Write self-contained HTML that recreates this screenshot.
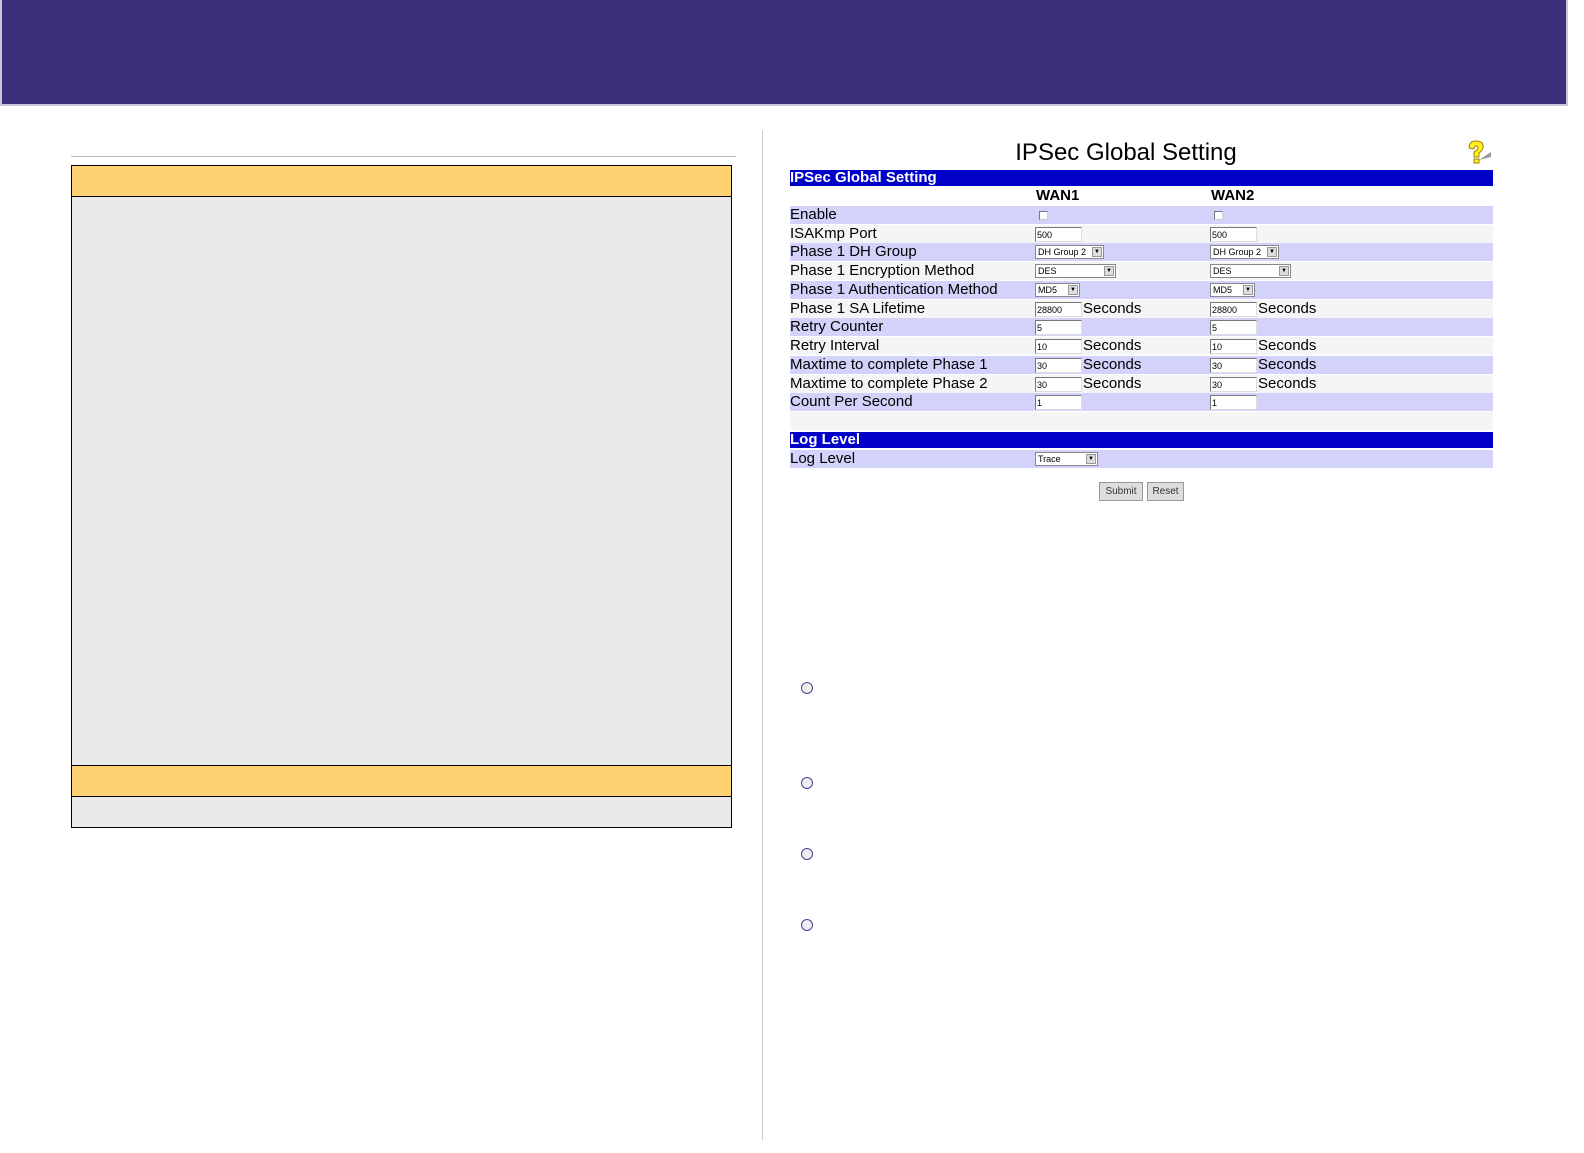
<!DOCTYPE html>
<html><head><meta charset="utf-8"><style>
body{margin:0;width:1584px;height:1153px;background:#fff;position:relative;font-family:"Liberation Sans",sans-serif;overflow:hidden}
.abs{position:absolute}
.row{position:absolute;left:790px;width:703px;height:18px;font-size:15px;line-height:18px;color:#000}
.p{background:#d2d2fa}.g{background:#f5f5f5}
.row span{position:absolute;top:0}
.inp{position:absolute;top:2px;height:15px;border:1px solid #777;border-right-color:#ddd;border-bottom-color:#ddd;background:#fff;font-size:9px;line-height:14px;padding-left:1px;box-sizing:border-box}
.sel{position:absolute;top:2px;height:14px;border:1px solid #888;background:#fff;font-size:9px;line-height:12px;padding-left:2px;box-sizing:border-box}
.sel i{position:absolute;right:1px;top:1px;width:10px;height:10px;background:#ddd;border:1px solid #999;box-sizing:border-box;font-style:normal;font-size:6px;line-height:8px;text-align:center}
.cb{position:absolute;top:5px;width:7px;height:7px;border:1px solid #777;border-right-color:#ccc;border-bottom-color:#ccc;background:#fff}
.bar{position:absolute;left:790px;width:703px;height:16px;background:#0000c8;color:#fff;font-weight:bold;font-size:15px;line-height:16px}
.circ{position:absolute;left:801px;width:10px;height:10px;border:1.5px solid #4a3f9a;border-radius:50%;background:#eee}
.btn{position:absolute;top:482px;height:17px;background:#ddd;border:1px solid #999;font-size:10px;line-height:17px;text-align:center;color:#333}
</style></head><body>
<div class="abs" style="left:0;top:0;width:1568px;height:106px;background:#3b2f7a;border:2px solid #c8c8d8;border-top:none;box-sizing:border-box"></div>
<div class="abs" style="left:71px;top:156px;width:665px;height:1px;background:#bbb"></div>
<div class="abs" style="left:71px;top:165px;width:661px;height:663px;border:1px solid #000;box-sizing:border-box;background:#e9e9e9"></div>
<div class="abs" style="left:72px;top:166px;width:659px;height:30px;background:#fed272;border-bottom:1px solid #000"></div>
<div class="abs" style="left:72px;top:765px;width:659px;height:30px;background:#fed272;border-top:1px solid #000;border-bottom:1px solid #000"></div>
<div class="abs" style="left:762px;top:130px;width:1px;height:1010px;background:#ccc"></div>
<div class="abs" style="left:790px;top:138px;width:672px;text-align:center;font-size:24px;line-height:30px">IPSec Global Setting</div>
<svg class="abs" style="left:1465px;top:140px" width="28" height="26" viewBox="0 0 28 26"><path d="M14 20 L26 12 L26 17 Z" fill="#999"/><path d="M4 8 Q4 1 11 1 Q19 1 18 8 Q17 11 14 13 L14 17 L9 17 L9 12 Q13 10 13 8 Q13 6 11 6 Q9 6 9 9 Z" fill="#ffef20" stroke="#a08000" stroke-width="1"/><rect x="9" y="19" width="5" height="4" fill="#ffef20" stroke="#a08000"/></svg>
<div class="bar" style="top:170px">IPSec Global Setting</div>
<div class="row" style="top:187px;background:#fff;font-weight:bold"><span style="left:246px">WAN1</span><span style="left:421px">WAN2</span></div>
<div class="row p" style="top:206px"><span>Enable</span><div class="cb" style="left:249px"></div><div class="cb" style="left:424px"></div></div>
<div class="row g" style="top:225px"><span>ISAKmp Port</span><div class="inp" style="left:245px;width:47px">500</div><div class="inp" style="left:420px;width:47px">500</div></div>
<div class="row p" style="top:243px"><span>Phase 1 DH Group</span><div class="sel" style="left:245px;width:69px">DH Group 2<i>▼</i></div><div class="sel" style="left:420px;width:69px">DH Group 2<i>▼</i></div></div>
<div class="row g" style="top:262px"><span>Phase 1 Encryption Method</span><div class="sel" style="left:245px;width:81px">DES<i>▼</i></div><div class="sel" style="left:420px;width:81px">DES<i>▼</i></div></div>
<div class="row p" style="top:281px"><span>Phase 1 Authentication Method</span><div class="sel" style="left:245px;width:45px">MD5<i>▼</i></div><div class="sel" style="left:420px;width:45px">MD5<i>▼</i></div></div>
<div class="row g" style="top:300px"><span>Phase 1 SA Lifetime</span><div class="inp" style="left:245px;width:47px">28800</div><span style="left:293px">Seconds</span><div class="inp" style="left:420px;width:47px">28800</div><span style="left:468px">Seconds</span></div>
<div class="row p" style="top:318px"><span>Retry Counter</span><div class="inp" style="left:245px;width:47px">5</div><div class="inp" style="left:420px;width:47px">5</div></div>
<div class="row g" style="top:337px"><span>Retry Interval</span><div class="inp" style="left:245px;width:47px">10</div><span style="left:293px">Seconds</span><div class="inp" style="left:420px;width:47px">10</div><span style="left:468px">Seconds</span></div>
<div class="row p" style="top:356px"><span>Maxtime to complete Phase 1</span><div class="inp" style="left:245px;width:47px">30</div><span style="left:293px">Seconds</span><div class="inp" style="left:420px;width:47px">30</div><span style="left:468px">Seconds</span></div>
<div class="row g" style="top:375px"><span>Maxtime to complete Phase 2</span><div class="inp" style="left:245px;width:47px">30</div><span style="left:293px">Seconds</span><div class="inp" style="left:420px;width:47px">30</div><span style="left:468px">Seconds</span></div>
<div class="row p" style="top:393px"><span>Count Per Second</span><div class="inp" style="left:245px;width:47px">1</div><div class="inp" style="left:420px;width:47px">1</div></div>
<div class="row g" style="top:412px"></div>
<div class="bar" style="top:432px">Log Level</div>
<div class="row p" style="top:450px"><span>Log Level</span><div class="sel" style="left:245px;width:63px">Trace<i>▼</i></div></div>
<div class="btn" style="left:1099px;width:42px">Submit</div>
<div class="btn" style="left:1147px;width:35px">Reset</div>
<div class="circ" style="top:682px"></div>
<div class="circ" style="top:777px"></div>
<div class="circ" style="top:848px"></div>
<div class="circ" style="top:919px"></div>
</body></html>
